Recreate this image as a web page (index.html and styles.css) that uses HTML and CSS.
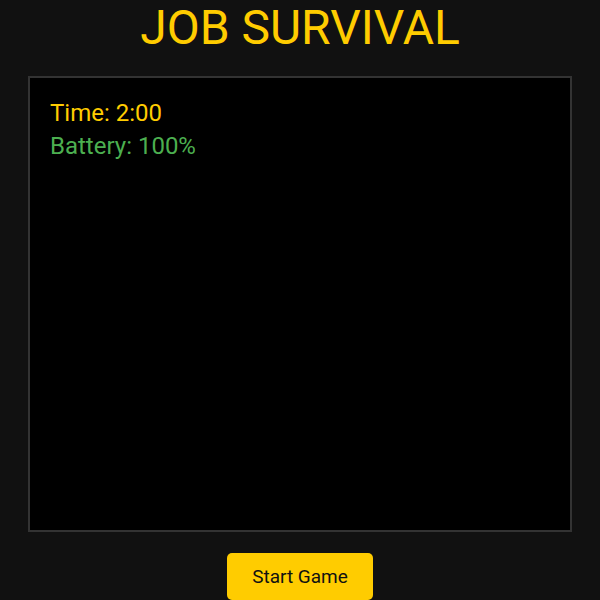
FILE: index.html
```html
<!DOCTYPE html>
<html>
<head>
<meta charset="utf-8">
<link rel="stylesheet" href="styles.css">
</head>
<body>
<div class="page">
  <h1 class="title">JOB SURVIVAL</h1>
  <div class="game">
    <div class="hud">
      <div class="time">Time: 2:00</div>
      <div class="battery">Battery: 100%</div>
    </div>
  </div>
  <button class="start">Start Game</button>
</div>
</body>
</html>
```
FILE: styles.css
```css
html, body {
  margin: 0;
  padding: 0;
  background: #111111;
  font-family: Roboto, "Liberation Sans", sans-serif;
}
.page {
  display: flex;
  flex-direction: column;
  align-items: center;
}
.title {
  margin: 0 0 20px 0;
  font-size: 48px;
  font-weight: 400;
  color: #ffcc00;
  line-height: 56px;
}
.game {
  width: 540px;
  height: 452px;
  border: 2px solid #333333;
  background: #000000;
  box-sizing: content-box;
}
.hud {
  padding: 21px 20px 20px 20px;
  display: flex;
  flex-direction: column;
  gap: 5px;
  font-size: 24px;
  line-height: 28px;
}
.time { color: #ffcc00; }
.battery { color: #4caf50; }
.start {
  margin-top: 21px;
  background: #ffcc00;
  color: #111111;
  border: none;
  border-radius: 5px;
  font-family: Roboto, "Liberation Sans", sans-serif;
  font-size: 19px;
  padding: 12px 25px;
}
```
